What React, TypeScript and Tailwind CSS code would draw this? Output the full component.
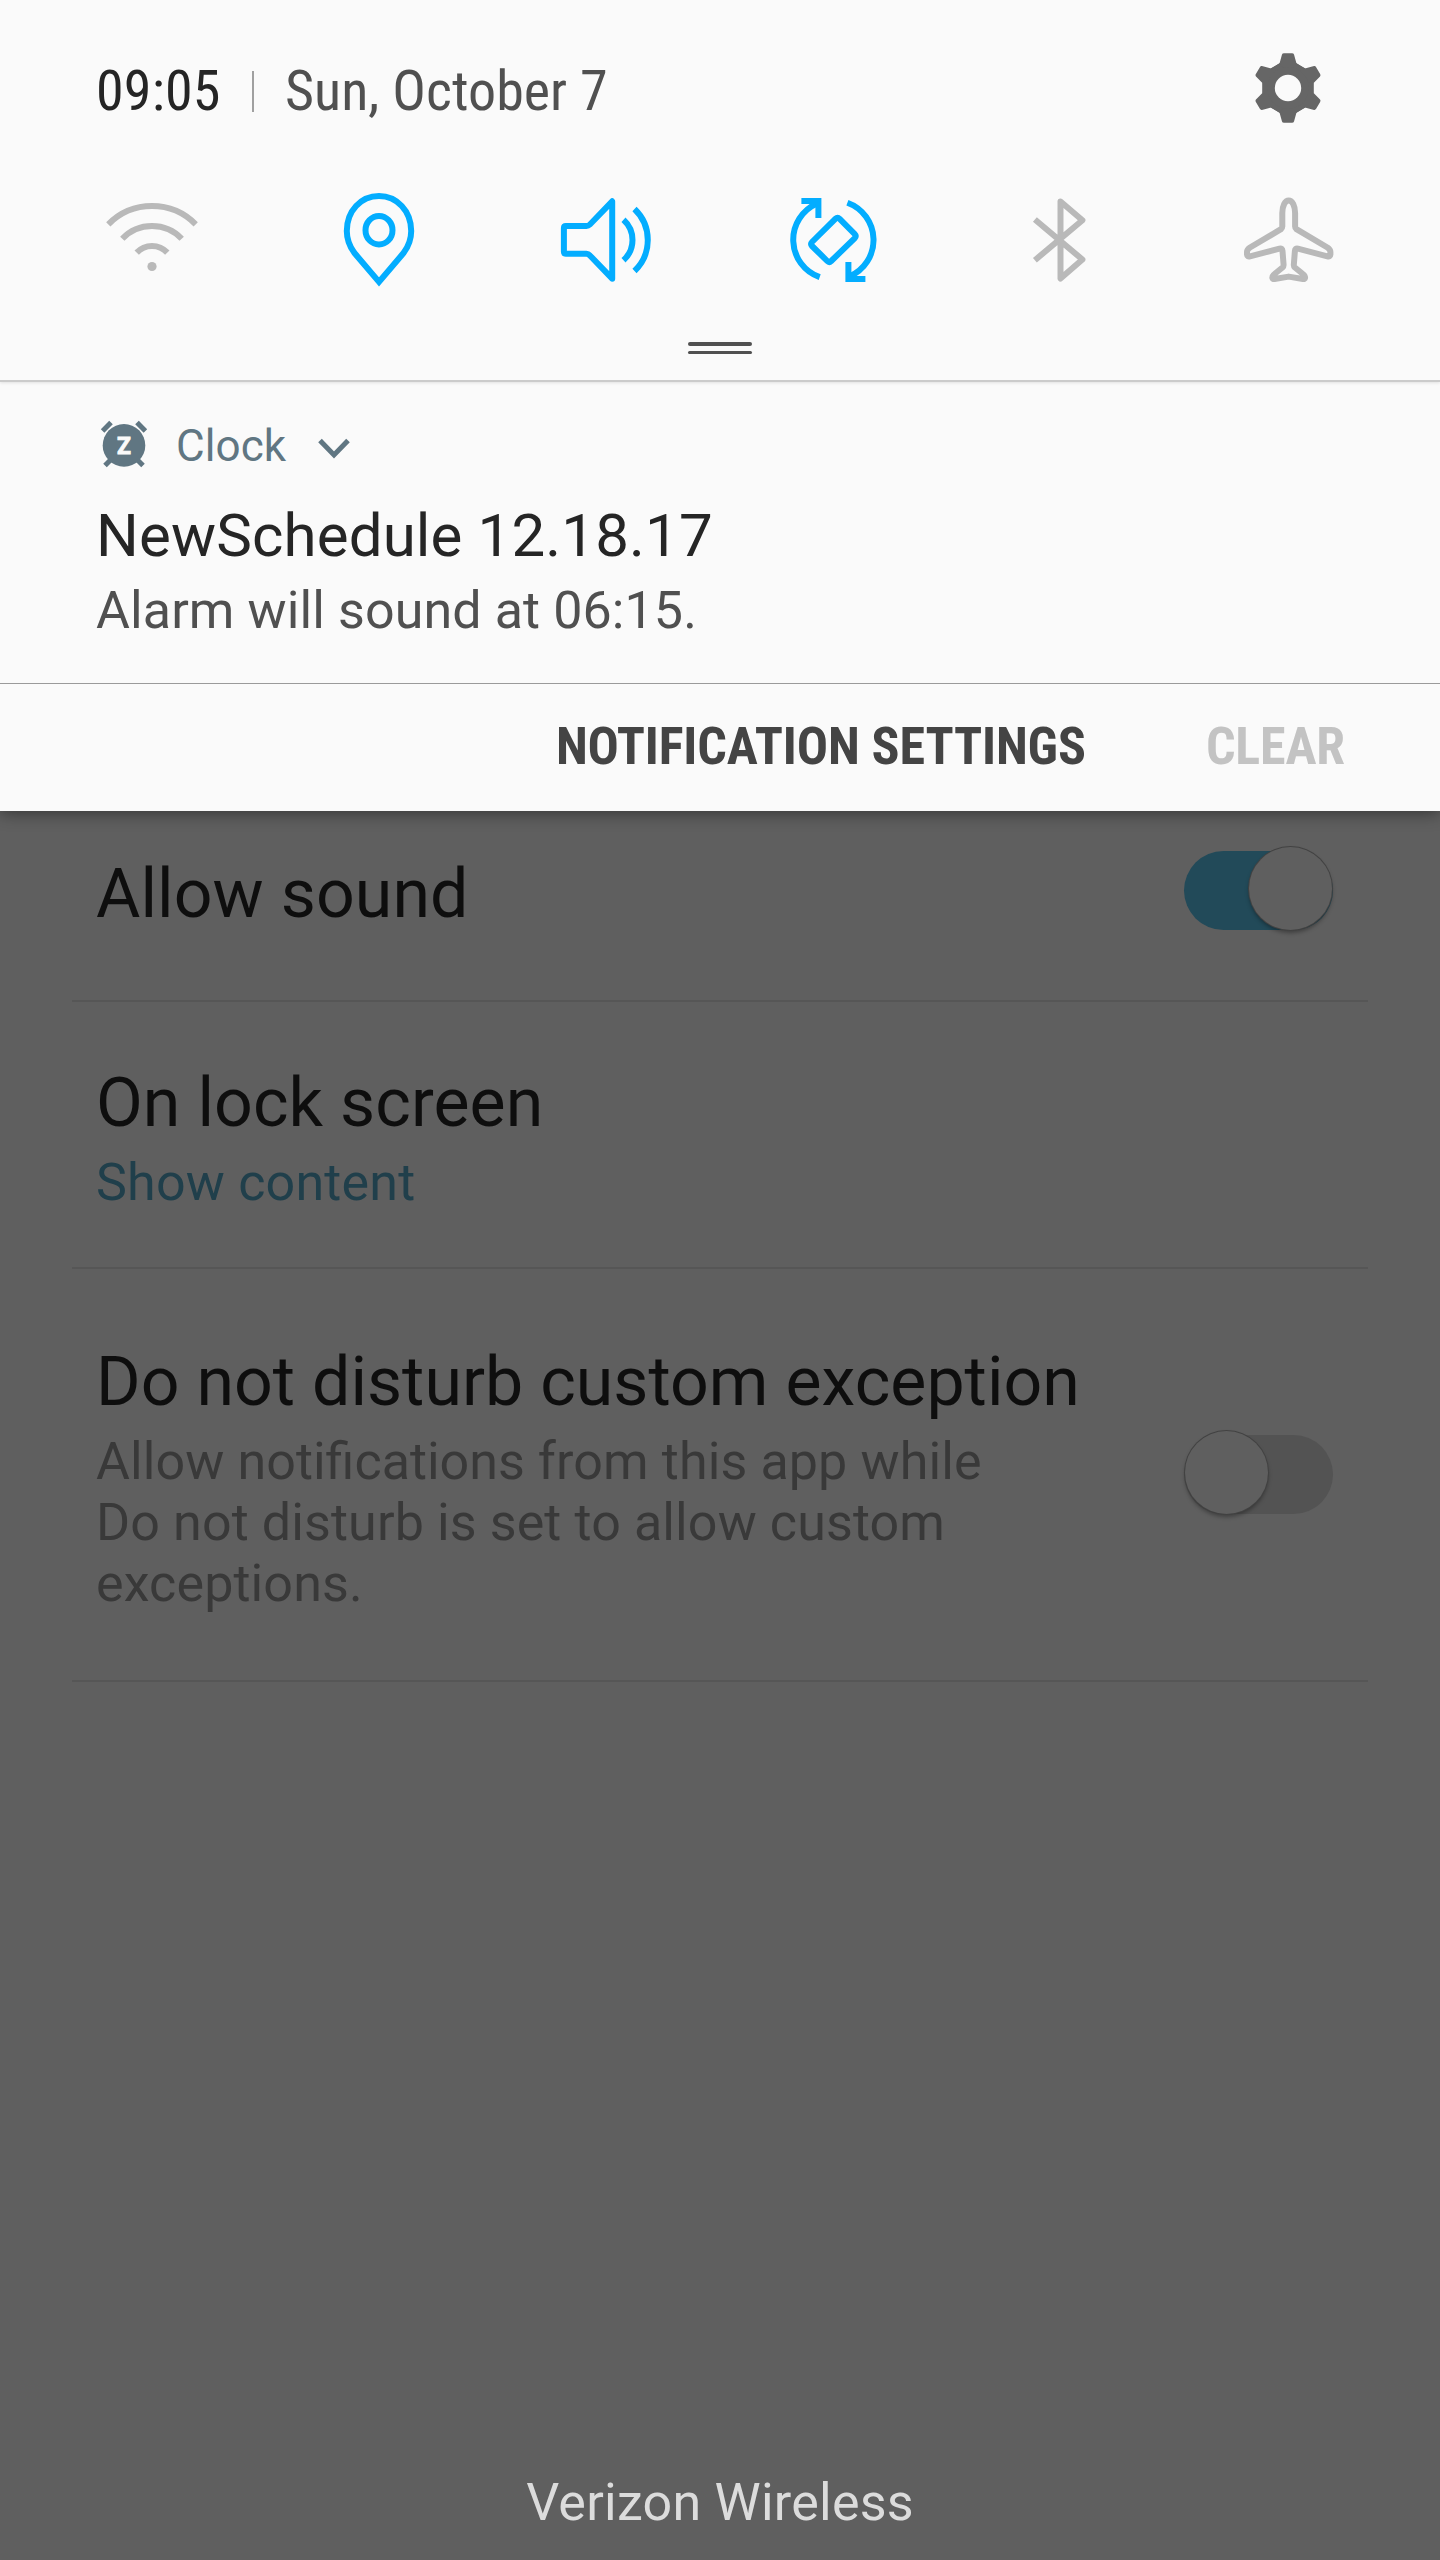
import type { ReactNode } from 'react';

const GREY = '#b9b9b9';
const BLUE = '#03adff';

const quickSettings: { name: string; color: string; shape: ReactNode }[] = [
  {
    name: 'Wi-Fi',
    color: GREY,
    shape: (
      <>
        <path d="M108.3 224.3A61.3 61.3 0 0 1 195.7 224.3" />
        <path d="M122.3 238.8A41 41 0 0 1 181.7 238.8" />
        <path d="M136.7 252.6A20.8 20.8 0 0 1 167.3 252.6" />
        <circle cx="152" cy="266.5" r="4.6" fill={GREY} stroke="none" />
      </>
    ),
  },
  {
    name: 'Location',
    color: BLUE,
    shape: (
      <>
        <path d="M379.2 281.9L354.5 252.8C349.5 246 347 239 347 231C347 211 361 196 379.2 196C397 196 411.4 211 411.4 231C411.4 239 408.9 246 403.9 252.8Z" />
        <ellipse cx="379.2" cy="230.2" rx="13.5" ry="14.3" />
      </>
    ),
  },
  {
    name: 'Sound',
    color: BLUE,
    shape: (
      <>
        <path
          strokeLinejoin="round"
          d="M566.3 226H586.8Q588.8 226 590.3 224.5L612.6 201.3V278.7L590.3 255.5Q588.8 253.8 586.8 253.8H566.3Q564.3 253.8 564.3 251.8V228Q564.3 226 566.3 226Z"
        />
        <path d="M623.9 219.7A27.4 27.4 0 0 1 623.9 260.3" />
        <path d="M634.9 209A42.8 42.8 0 0 1 634.9 271" />
      </>
    ),
  },
  {
    name: 'Auto rotate',
    color: BLUE,
    shape: (
      <>
        <path d="M819.3 277.2A39.6 39.6 0 0 1 816.7 203.5" />
        <path d="M801 201H818V218" />
        <path d="M847 202.8A39.6 39.6 0 0 1 849 276.5" />
        <path d="M865 279H848V262" />
        <path
          strokeLinejoin="round"
          d="M839 218.7L854.4 234.1Q856.4 236.1 854.4 238.1L830.8 261Q828.8 263 826.8 261L811.6 246Q809.6 244 811.6 242L835.2 218.7Q837.2 216.7 839 218.7Z"
        />
      </>
    ),
  },
  {
    name: 'Bluetooth',
    color: GREY,
    shape: (
      <path
        strokeLinejoin="round"
        d="M1034.7 219.5L1082.2 259.5L1060.3 278.5V201.5L1082.2 220.2L1034.7 260.2"
      />
    ),
  },
  {
    name: 'Airplane mode',
    color: GREY,
    shape: (
      <path
        strokeLinejoin="round"
        d="M1288.7 200.4C1285 200.4 1282.3 206 1282.3 213V226.5Q1282.3 228.3 1281 229.2L1250 247.5Q1247 249.5 1247 252V254.5Q1247.2 257 1250 256.3L1279.5 248.6Q1282.3 248 1282.5 251L1283.6 265Q1283.6 266.5 1282.5 267.5L1274.5 274Q1272.3 275.7 1272.3 277.8Q1272.6 279.4 1274.5 279L1288.7 276.6L1302.9 279Q1304.8 279.4 1305.1 277.8Q1305.1 275.7 1302.9 274L1294.9 267.5Q1293.8 266.5 1293.8 265L1294.9 251Q1295.1 248 1297.9 248.6L1327.4 256.3Q1330.2 257 1330.4 254.5V252Q1330.4 249.5 1327.4 247.5L1296.4 229.2Q1295.1 228.3 1295.1 226.5V213C1295.1 206 1292.4 200.4 1288.7 200.4Z"
      />
    ),
  },
];

const toothAngles = [0, 60, 120, 180, 240, 300];

function Gear() {
  return (
    <svg className="h-20 w-20" viewBox="-40 -40 80 80" fill="#666666">
      {toothAngles.map((angle) => (
        <path
          key={angle}
          transform={`rotate(${angle})`}
          d="M-17.5 -19.6L-8.5 -24.4L-6 -33.5Q-5.6 -34.8 -4 -34.8H4Q5.6 -34.8 6 -33.5L8.5 -24.4L17.5 -19.6L8 0H-8Z"
        />
      ))}
      <circle r="21" />
      <circle r="13.2" fill="#fafafa" />
    </svg>
  );
}

function AlarmIcon() {
  return (
    <svg className="h-12 w-12" viewBox="100 420 48 48" fill="#607682">
      <circle cx="124" cy="445.4" r="21.3" />
      <g stroke="#607682" strokeWidth="5">
        <path d="M102.6 431L111 422.4M145.4 431L137 422.4M105 465.5L111 459.5M143 465.5L137 459.5" />
      </g>
      <text
        x="124"
        y="453.6"
        textAnchor="middle"
        fill="#fafafa"
        stroke="#fafafa"
        strokeWidth="0.8"
        className="font-['Roboto'] text-[23px] font-bold"
      >
        Z
      </text>
    </svg>
  );
}

function Toggle({ on }: { on: boolean }) {
  return (
    <div
      className={`relative mt-[5px] h-[79px] w-[149px] shrink-0 rounded-full ${
        on ? 'bg-[#224a59]' : 'bg-[#535353]'
      }`}
    >
      <div
        className={`absolute -top-[4px] h-[83px] w-[83px] rounded-full bg-[#5f5f5f] shadow-[0_0_0_1px_#424242,0_3px_4px_rgba(0,0,0,0.35)] ${
          on ? 'left-[65px]' : 'left-px'
        }`}
      />
    </div>
  );
}

export default function App() {
  return (
    <div className="flex h-[2560px] w-[1440px] flex-col overflow-hidden bg-[#5f5f5f] font-['Roboto',sans-serif]">
      <section className="relative z-10 h-[811px] bg-[#fafafa] shadow-[0_2px_16px_rgba(0,0,0,0.45)]">
        <header className="h-[382px] border-b-2 border-[#cbcbcb] shadow-[0_1px_3px_rgba(0,0,0,0.1)]">
          <div className="flex h-[190px] items-start justify-between pr-28 pl-24">
            <div className="flex items-center pt-[59px] font-['Roboto_Condensed','Roboto',sans-serif] text-[56px] leading-[64px] whitespace-nowrap [font-stretch:75%]">
              <span className="w-[156px] tracking-[0.2px] text-[#252525]">09:05</span>
              <span className="h-[41px] w-0.5 bg-[#a0a0a0]" />
              <span className="pl-[31px] tracking-[0.04px] text-[#505050]">Sun, October 7</span>
            </div>
            <div className="pt-12">
              <Gear />
            </div>
          </div>
          <div className="flex justify-between px-[102px]">
            {quickSettings.map((item, i) => (
              <svg
                key={item.name}
                className="h-[100px] w-[100px]"
                viewBox={`${102 + 227.2 * i} 190 100 100`}
                fill="none"
                stroke={item.color}
                strokeWidth="6"
              >
                {item.shape}
              </svg>
            ))}
          </div>
          <div className="mx-auto mt-[52px] flex w-16 flex-col gap-[5px]">
            <span className="h-[3.5px] rounded-full bg-[#505050]" />
            <span className="h-[3.5px] rounded-full bg-[#505050]" />
          </div>
        </header>

        <article className="h-[301px] px-24 pt-[34px]">
          <div className="flex h-14 items-center text-[44px] leading-14 text-[#607682]">
            <div className="ml-1">
              <AlarmIcon />
            </div>
            <span className="mt-[3px] ml-7 tracking-[0.1px]">Clock</span>
            <svg
              className="mt-[9px] ml-[30px] h-6 w-9"
              viewBox="316 437 36 24"
              fill="none"
              stroke="#607682"
              strokeWidth="5"
            >
              <path d="M320 440.5L334 455L348 440.5" />
            </svg>
          </div>
          <h1 className="mt-[28px] text-[60px] leading-[72px] tracking-[0.15px] text-[#252525]">
            NewSchedule 12.18.17
          </h1>
          <p className="mt-[7px] text-[52px] leading-[64px] tracking-[0.1px] text-[#505050]">
            Alarm will sound at 06:15.
          </p>
        </article>

        <footer className="flex h-32 items-center justify-end gap-[120px] border-t border-[#9a9a9a] pr-[95px] pb-0.5 font-['Roboto_Condensed','Roboto',sans-serif] text-[52px] font-bold [font-stretch:75%]">
          <button className="tracking-[-0.12px] text-[#444444]">NOTIFICATION SETTINGS</button>
          <button className="tracking-[-0.15px] text-[#c3c3c3]">CLEAR</button>
        </footer>
      </section>

      <main className="flex flex-1 flex-col px-[72px]">
        <div className="flex h-[191px] justify-between border-b-2 border-[#565656] pt-[35px] pr-[35px] pl-6">
          <h2 className="pt-[8px] text-[68px] leading-[80px] tracking-[0.1px] text-[#0e0e0e]">
            Allow sound
          </h2>
          <Toggle on />
        </div>
        <div className="h-[267px] border-b-2 border-[#565656] pt-[61px] pl-6">
          <h2 className="text-[68px] leading-[80px] tracking-[0.08px] text-[#0e0e0e]">
            On lock screen
          </h2>
          <p className="mt-[9px] text-[52px] leading-[61px] tracking-[0.2px] text-[#203f4b]">
            Show content
          </p>
        </div>
        <div className="flex h-[413px] justify-between border-b-2 border-[#565656] pr-[35px] pl-6">
          <div className="w-[1000px] pt-[73px]">
            <h2 className="text-[68px] leading-[80px] tracking-[0.04px] whitespace-nowrap text-[#0e0e0e]">
              Do not disturb custom exception
            </h2>
            <p className="mt-[9px] w-[940px] text-[52px] leading-[61px] tracking-[0.12px] text-[#393939]">
              Allow <span className="tracking-normal">notifications</span> from this app while Do
              not disturb is set to allow custom exceptions.
            </p>
          </div>
          <div className="pt-[161px]">
            <Toggle on={false} />
          </div>
        </div>
        <p className="mt-auto mb-[27px] text-center text-[52px] leading-[61px] tracking-[0.24px] text-[#dcdcdc]">
          Verizon Wireless
        </p>
      </main>
    </div>
  );
}
